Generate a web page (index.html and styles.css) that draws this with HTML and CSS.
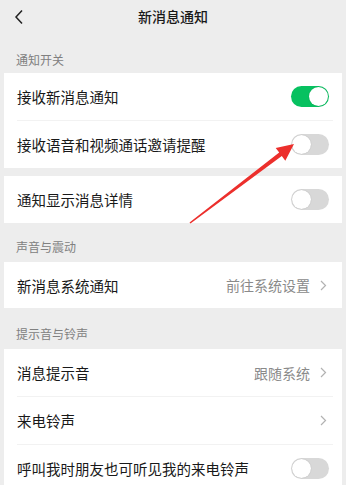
FILE: index.html
```html
<!DOCTYPE html>
<html lang="zh-CN">
<head>
  <meta charset="UTF-8" />
  <meta name="viewport" content="width=device-width, initial-scale=1.0" />
  <title>新消息通知</title>
  <link rel="stylesheet" href="styles.css">
</head>
<body>
  <header class="topbar">
    <svg class="back" width="12" height="16" viewBox="0 0 12 16">
      <polyline points="8,1.5 2,8 8,14.5" fill="none" stroke="#222" stroke-width="1.5" />
    </svg>
    <h1>新消息通知</h1>
  </header>

  <div class="label label-first">通知开关</div>
  <div class="card">
    <div class="row">
      <span class="name">接收新消息通知</span>
      <span class="switch on"></span>
    </div>
    <div class="divider"></div>
    <div class="row">
      <span class="name">接收语音和视频通话邀请提醒</span>
      <span class="switch"></span>
    </div>
  </div>
  <div class="card card-gap">
    <div class="row">
      <span class="name">通知显示消息详情</span>
      <span class="switch"></span>
    </div>
  </div>

  <div class="label label-sound">声音与震动</div>
  <div class="card">
    <div class="row row-short">
      <span class="name">新消息系统通知</span>
      <span class="value">前往系统设置<svg class="more" width="7" height="11" viewBox="0 0 7 11"><polyline points="1,1 5.5,5.5 1,10" fill="none" stroke="#b2b2b2" stroke-width="1.2" /></svg></span>
    </div>
  </div>

  <div class="label label-ring">提示音与铃声</div>
  <div class="card">
    <div class="row">
      <span class="name">消息提示音</span>
      <span class="value">跟随系统<svg class="more" width="7" height="11" viewBox="0 0 7 11"><polyline points="1,1 5.5,5.5 1,10" fill="none" stroke="#b2b2b2" stroke-width="1.2" /></svg></span>
    </div>
    <div class="divider"></div>
    <div class="row">
      <span class="name">来电铃声</span>
      <span class="value"><svg class="more" width="7" height="11" viewBox="0 0 7 11"><polyline points="1,1 5.5,5.5 1,10" fill="none" stroke="#b2b2b2" stroke-width="1.2" /></svg></span>
    </div>
    <div class="divider"></div>
    <div class="row">
      <span class="name">呼叫我时朋友也可听见我的来电铃声</span>
      <span class="switch"></span>
    </div>
  </div>

  <!-- annotation arrow drawn over the screenshot -->
  <svg class="arrow" width="346" height="485" viewBox="0 0 346 485">
    <polygon fill="#ec2f2c" points="190.5,223.6 189.5,222.4 279.2,152.5 275.7,147.9 294,144 285.3,160.7 281.8,156.1" />
  </svg>
</body>
</html>
```

FILE: styles.css
```css
body {
  margin: 0;
  background-color: #ededed;
  color: #191919;
  font-family: "Noto Sans CJK SC", "Noto Sans", sans-serif;
  position: relative;
  overflow: hidden;
  height: 485px;
}

.topbar {
  height: 32px;
  position: relative;
  display: flex;
  align-items: center;
  justify-content: center;
}

.topbar h1 {
  margin: 0;
  font-size: 14px;
  font-weight: 500;
  line-height: 32px;
}

.back {
  position: absolute;
  left: 14px;
  top: 9px;
}

.label {
  font-size: 12px;
  line-height: 14px;
  color: #808080;
  padding: 0 16px 8px;
}

.label-first {
  padding-top: 21px;
  padding-bottom: 6px;
}

.label-sound {
  padding-top: 17px;
}

.label-ring {
  padding-top: 19px;
}

.card {
  background-color: #fff;
  margin: 0 4px;
}

.card-gap {
  margin-top: 8px;
}

.row {
  height: 47px;
  display: flex;
  align-items: center;
  justify-content: space-between;
  padding: 0 13px 0 13px;
}

.row-short {
  height: 46px;
}

.name {
  font-size: 14.5px;
}

.value {
  display: flex;
  align-items: center;
  font-size: 14px;
  color: #8a8a8a;
  padding-right: 2px;
}

.more {
  margin-left: 10px;
}

.divider {
  height: 1px;
  background-color: #f2f2f2;
  margin: 0 9px 0 13px;
}

.switch {
  width: 38px;
  height: 21px;
  border-radius: 11px;
  background-color: #d8d8d8;
  position: relative;
}

.switch::after {
  content: "";
  position: absolute;
  top: 1px;
  left: 1px;
  width: 19px;
  height: 19px;
  border-radius: 50%;
  background-color: #fff;
  box-shadow: 0 0 1px rgba(0, 0, 0, 0.25);
}

.switch.on {
  background-color: #07c160;
}

.switch.on::after {
  left: 18px;
}

.arrow {
  position: absolute;
  top: 0;
  left: 0;
  pointer-events: none;
}
```
